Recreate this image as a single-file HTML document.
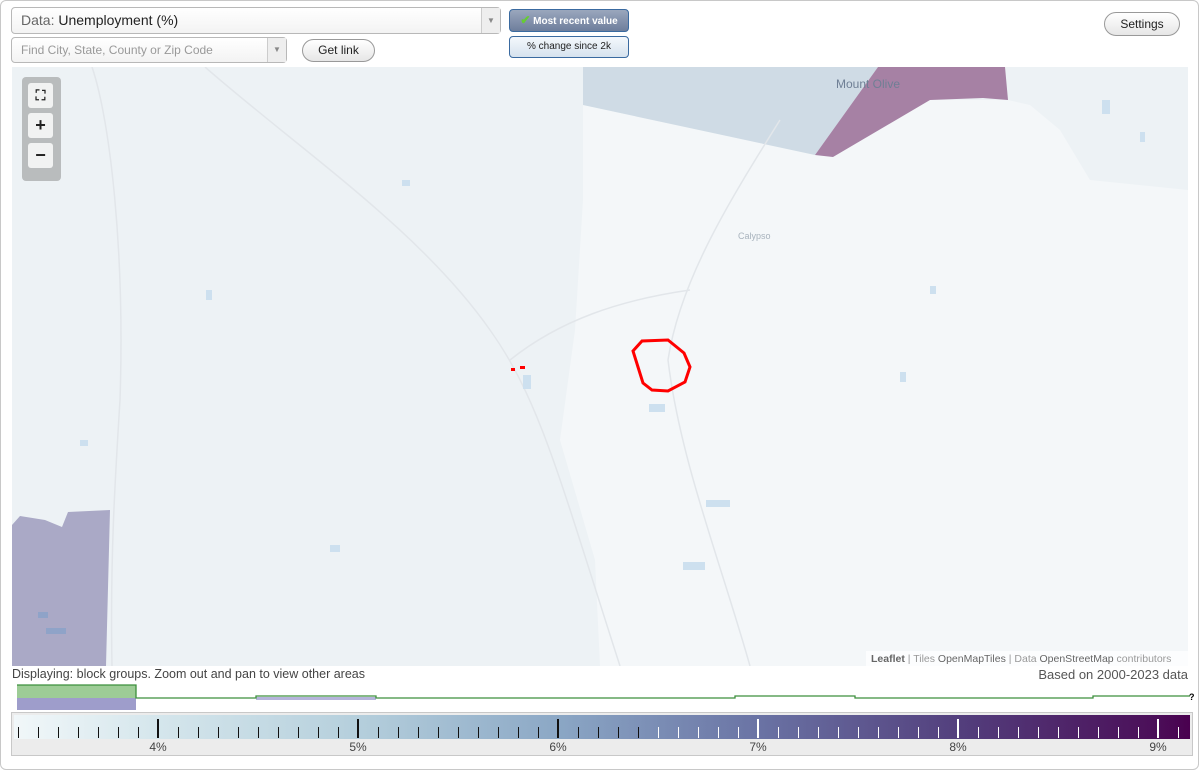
<!DOCTYPE html>
<html><head><meta charset="utf-8"><style>
*{box-sizing:border-box}
body{margin:0;width:1200px;height:771px;background:#fff;font-family:"Liberation Sans",sans-serif;position:relative;overflow:hidden}
.frame{position:absolute;left:0;top:0;width:1199px;height:770px;border:1px solid #c8c8c8;border-radius:6px}
.sel{position:absolute;border:1px solid #b8b8b8;border-radius:4px;background:linear-gradient(#fff,#f3f3f3);}
.sel .arr{position:absolute;right:0;top:0;bottom:0;width:19px;border-left:1px solid #ccc;background:#eee;color:#888;font-size:8px;text-align:center}
.btn{position:absolute;border:1px solid #999;border-radius:12px;background:linear-gradient(#fff,#e6e6e6);font-size:12px;color:#222;text-align:center}
.tb{position:absolute;border:1px solid #3a6aa0;border-radius:4px;font-size:10px;text-align:center}
.ctl{position:absolute;left:22px;top:77px;width:39px;height:104px;background:#b9bcbd;border-radius:4px}
.ctl div{position:absolute;left:6px;width:25px;height:25px;background:#f1f2f2;border-radius:3px;text-align:center;font-weight:bold;font-size:18px;line-height:25px;color:#222}
</style></head><body>
<div class="frame"></div>
<div class="sel" style="left:11px;top:7px;width:490px;height:27px;font-size:14px;line-height:25px;padding-left:9px;color:#666">Data: <span style="color:#222">Unemployment (%)</span><div class="arr" style="line-height:25px">▼</div></div>
<div class="sel" style="left:11px;top:37px;width:276px;height:26px;font-size:12px;line-height:24px;padding-left:9px;color:#999">Find City, State, County or Zip Code<div class="arr" style="line-height:24px">▼</div></div>
<div class="btn" style="left:302px;top:39px;width:73px;height:23px;line-height:21px">Get link</div>
<div class="tb" style="left:509px;top:9px;width:120px;height:23px;line-height:21px;background:linear-gradient(#9aa7bd,#6e7e9c);color:#fff;font-weight:bold;font-size:10px"><span style="color:#6c3;font-size:12px">✔</span> Most recent value</div>
<div class="tb" style="left:509px;top:36px;width:120px;height:22px;line-height:20px;background:linear-gradient(#f4f8fc,#d6e2ee);color:#222">% change since 2k</div>
<div class="btn" style="left:1104px;top:12px;width:76px;height:24px;line-height:22px">Settings</div>

<svg style="position:absolute;left:12px;top:67px" width="1176" height="599" viewBox="12 67 1176 599">
<rect x="12" y="67" width="1176" height="599" fill="#edf2f5"/>
<polygon points="583,105 815,155 833,157 930,100 1008,100 1030,105 1060,130 1090,180 1188,190 1188,666 600,666 595,560 560,440 575,330 583,200" fill="#f4f7f9"/>
<polygon points="583,67 878,67 815,155 583,105" fill="#cfdbe5"/>
<polygon points="878,67 1005,67 1008,100 983,98 930,100 833,157 815,155" fill="#a681a4"/>
<polygon points="12,525 20,516 45,520 62,527 68,512 110,510 106,666 12,666" fill="#aaa9c6"/>
<g fill="none" stroke="#e2e6ea" stroke-width="1.5">
<path d="M205,67 C300,150 420,230 490,330 C540,400 560,480 620,666"/>
<path d="M92,67 C110,120 125,250 120,400 C115,480 110,560 112,666"/>
<path d="M780,120 C730,200 680,280 668,360 C680,460 720,560 750,666"/>
<path d="M510,360 C560,320 620,300 690,290"/>
</g>
<g fill="#cde0ef">
<rect x="1102" y="100" width="8" height="14"/><rect x="1140" y="132" width="5" height="10"/><rect x="649" y="404" width="16" height="8"/>
<rect x="706" y="500" width="24" height="7"/><rect x="683" y="562" width="22" height="8"/><rect x="206" y="290" width="6" height="10"/>
<rect x="523" y="375" width="8" height="14"/><rect x="900" y="372" width="6" height="10"/><rect x="402" y="180" width="8" height="6"/>
<rect x="80" y="440" width="8" height="6"/><rect x="330" y="545" width="10" height="7"/><rect x="930" y="286" width="6" height="8"/>
</g>
<g fill="#8fa3c8"><rect x="38" y="612" width="10" height="6"/><rect x="46" y="628" width="20" height="6"/></g>
<text x="836" y="88" font-family="Liberation Sans,sans-serif" font-size="12" fill="#6f7f95">Mount Olive</text>
<text x="738" y="239" font-family="Liberation Sans,sans-serif" font-size="9" fill="#a8b3bd">Calypso</text>
<path d="M633,351 L642,341 L668,340 L684,353 L690,367 L685,382 L668,391 L652,390 L643,383 L638,367 Z" fill="none" stroke="#f00" stroke-width="3"/>
<rect x="511" y="368" width="4" height="3" fill="#f00"/><rect x="520" y="366" width="5" height="3" fill="#f00"/>
<rect x="866" y="651" width="322" height="15" fill="rgba(255,255,255,0.75)"/>
<text x="871" y="662" font-family="Liberation Sans,sans-serif" font-size="10.5" fill="#999"><tspan fill="#666" font-weight="bold">Leaflet</tspan> | Tiles <tspan fill="#666">OpenMapTiles</tspan> | Data <tspan fill="#666">OpenStreetMap</tspan> contributors</text>
</svg>
<div class="ctl"><div style="top:6px;font-size:14px">⛶</div><div style="top:36px">+</div><div style="top:66px">−</div></div>

<div style="position:absolute;left:12px;top:667px;font-size:12.5px;color:#444">Displaying: block groups. Zoom out and pan to view other areas</div>
<div style="position:absolute;right:12px;top:667px;font-size:13px;color:#555">Based on 2000-2023 data</div>

<svg style="position:absolute;left:0;top:680px" width="1200" height="90">
<rect x="17" y="5" width="119" height="13" fill="#9dcc96"/>
<rect x="17" y="18" width="119" height="12" fill="#9e9dcb"/>
<rect x="256" y="17" width="120" height="3" fill="#b4b3da"/>
<path d="M17,5 H136 V18 H256 V16 H376 V18 H735 V16 H855 V18 H1093 V16 H1190" fill="none" stroke="#3c8f3c" stroke-width="1.3"/>
<text x="1189" y="20" font-size="9" font-weight="bold" font-family="Liberation Sans,sans-serif">?</text>
<rect x="11.5" y="32.5" width="1181" height="43" fill="#ececec" stroke="#c8c8c8"/>
<defs><linearGradient id="g" x1="14" x2="1190" gradientUnits="userSpaceOnUse">
<stop offset="0" stop-color="#f1f7f9"/><stop offset="0.122" stop-color="#d5e6ec"/><stop offset="0.293" stop-color="#b5cfdc"/>
<stop offset="0.463" stop-color="#8ba7c5"/><stop offset="0.633" stop-color="#6a73a4"/><stop offset="0.803" stop-color="#533f7d"/>
<stop offset="0.973" stop-color="#4b0e58"/><stop offset="1" stop-color="#4a004f"/></linearGradient></defs>
<rect x="14" y="35" width="1176" height="24" fill="url(#g)"/>
<g font-family="Liberation Sans,sans-serif" font-size="12" fill="#444" text-anchor="middle">
<text x="158" y="71">4%</text><text x="358" y="71">5%</text><text x="558" y="71">6%</text><text x="758" y="71">7%</text><text x="958" y="71">8%</text><text x="1158" y="71">9%</text></g>
<g stroke-width="1">
<path stroke="#111" d="M18.5,47V58M38.5,47V58M58.5,47V58M78.5,47V58M98.5,47V58M118.5,47V58M138.5,47V58M178.5,47V58M198.5,47V58M218.5,47V58M238.5,47V58M258.5,47V58M278.5,47V58M298.5,47V58M318.5,47V58M338.5,47V58M378.5,47V58M398.5,47V58M418.5,47V58M438.5,47V58M458.5,47V58M478.5,47V58M498.5,47V58M518.5,47V58M538.5,47V58M578.5,47V58M598.5,47V58M618.5,47V58M638.5,47V58"/>
<path stroke="#fff" d="M658.5,47V58M678.5,47V58M698.5,47V58M718.5,47V58M738.5,47V58M778.5,47V58M798.5,47V58M818.5,47V58M838.5,47V58M858.5,47V58M878.5,47V58M898.5,47V58M918.5,47V58M938.5,47V58M978.5,47V58M998.5,47V58M1018.5,47V58M1038.5,47V58M1058.5,47V58M1078.5,47V58M1098.5,47V58M1118.5,47V58M1138.5,47V58M1178.5,47V58"/>
<path stroke="#111" stroke-width="2" d="M158,39V58M358,39V58M558,39V58"/>
<path stroke="#fff" stroke-width="2" d="M758,39V58M958,39V58M1158,39V58"/>
</g>
</svg>
</body></html>
